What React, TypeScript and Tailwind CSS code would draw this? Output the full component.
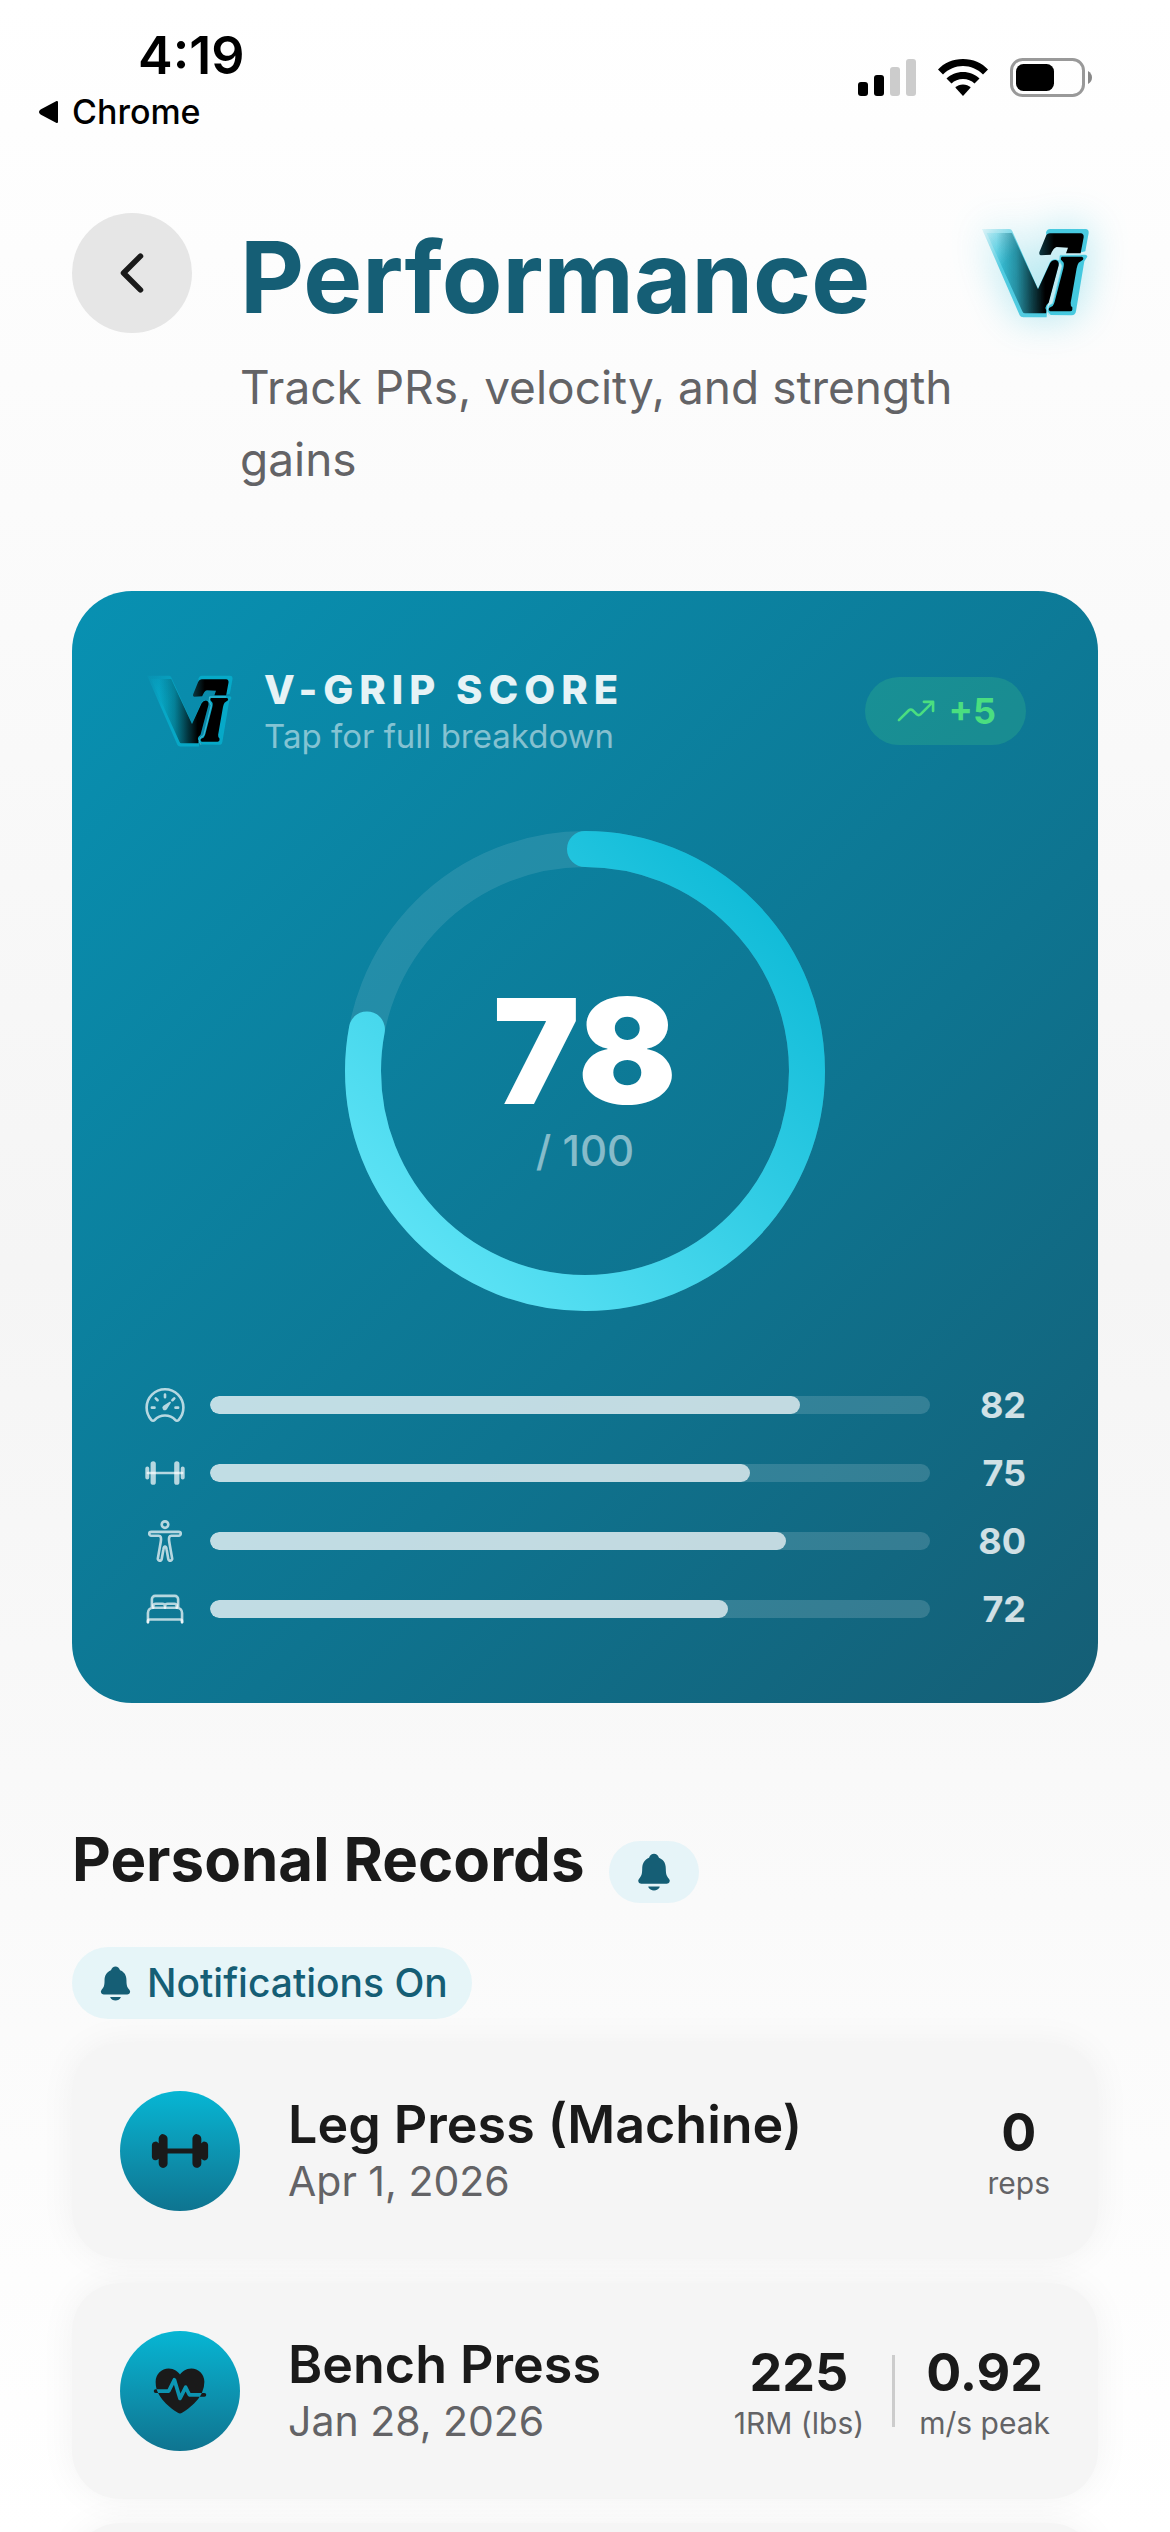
import { useId } from "react";
import type { IconType } from "react-icons";
import {
  IoBarbell,
  IoBarbellOutline,
  IoBedOutline,
  IoBodyOutline,
  IoChevronBack,
  IoFitness,
  IoNotifications,
  IoSpeedometerOutline,
  IoTrendingUpOutline,
} from "react-icons/io5";

type Stat = { value: string; label: string };

type PersonalRecord = {
  name: string;
  date: string;
  icon: IconType;
  stats: Stat[];
};

const SCORE = 78;

const breakdown: { label: string; icon: IconType; value: number }[] = [
  { label: "Velocity", icon: IoSpeedometerOutline, value: 82 },
  { label: "Strength", icon: IoBarbellOutline, value: 75 },
  { label: "Body", icon: IoBodyOutline, value: 80 },
  { label: "Recovery", icon: IoBedOutline, value: 72 },
];

const records: PersonalRecord[] = [
  {
    name: "Leg Press (Machine)",
    date: "Apr 1, 2026",
    icon: IoBarbell,
    stats: [{ value: "0", label: "reps" }],
  },
  {
    name: "Bench Press",
    date: "Jan 28, 2026",
    icon: IoFitness,
    stats: [
      { value: "225", label: "1RM (lbs)" },
      { value: "0.92", label: "m/s peak" },
    ],
  },
];

const Logo = ({ className }: { className?: string }) => {
  const id = useId();

  return (
    <svg viewBox="534 579 360 360" className={className} aria-hidden="true">
      <defs>
        <linearGradient id={`${id}edge`} gradientUnits="userSpaceOnUse" x1="546" y1="627" x2="640" y2="700">
          <stop offset="0" stopColor="#06b6d4" stopOpacity="0.1" />
          <stop offset="1" stopColor="#06b6d4" stopOpacity="0.65" />
        </linearGradient>
        <linearGradient id={`${id}fill`} gradientUnits="userSpaceOnUse" x1="590" y1="0" x2="735" y2="0">
          <stop offset="0" stopColor="#001a20" stopOpacity="0" />
          <stop offset="0.4" stopColor="#001a20" stopOpacity="0.3" />
          <stop offset="0.75" stopColor="#000d10" stopOpacity="0.75" />
          <stop offset="1" stopColor="#000" />
        </linearGradient>
        <linearGradient id={`${id}hook`} gradientUnits="userSpaceOnUse" x1="716" y1="0" x2="762" y2="0">
          <stop offset="0" stopColor="#0b3a44" />
          <stop offset="1" stopColor="#000" />
        </linearGradient>
      </defs>
      <path
        fill={`url(#${id}edge)`}
        d="M546 627H628Q634 627 637 634L714 806L749 728Q755 718 766 718L780 722L742 860L740 892H670Q662 892 659 886Z"
      />
      <path
        fill={`url(#${id}edge)`}
        fillOpacity="0.5"
        d="M560 639H636L714 808L750 730L738 880H674Q669 880 667 874Z"
      />
      <path
        fill={`url(#${id}fill)`}
        d="M560 639H636L714 808L750 730Q756 720 766 720Q778 722 776 736L746 848Q736 856 736 864Q741 872 738 880H674Q669 880 667 874Z"
      />
      <path
        fill="#06b6d4"
        fillOpacity="0.7"
        d="M738 637Q742 627 750 627H856Q867 627 866 639L856 694L843 697L846 650L740 652Z"
      />
      <path
        fill={`url(#${id}hook)`}
        d="M737 650Q741 640 750 640H842Q852 641 851 652L842 700H798L804 683L770 681Q760 683 752 704L722 706Q716 704 718 697Z"
      />
      <path
        fill="#06b6d4"
        fillOpacity="0.7"
        d="M780 706L856 704Q864 706 861 712L853 724L828 874Q826 886 815 886L752 885L742 874L748 856L758 850L786 738L778 722Z"
      />
      <path
        fill="none"
        stroke="#7fdcec"
        strokeOpacity="0.6"
        strokeWidth="3"
        d="M842 706H780L778 722L786 738L758 850L746 858L741 874L748 886"
      />
      <path
        fill="#000"
        d="M786 710H845Q852 712 849 719L836 728Q832 734 830 745L812 848Q811 858 817 862V869Q816 874 810 874H750Q744 871 747 864L758 858Q762 852 764 845L790 745Q793 730 790 727L783 719Q781 712 786 710Z"
      />
    </svg>
  );
};

const StatusBar = () => (
  <div className="flex items-start justify-between pt-7 pr-[78px] pl-[38px]">
    <div>
      <p className="pl-25 text-[52px] leading-[56px] font-semibold">4:19</p>
      <a href="#" className="flex items-center gap-3 text-[34px] leading-[56px] font-medium">
        <svg viewBox="0 0 22 24" className="w-[22px]" aria-hidden="true">
          <path d="M3 10.5L19 2v20L3 13.5Q1 12 3 10.5Z" stroke="#000" strokeWidth="2" strokeLinejoin="round" />
        </svg>
        Chrome
      </a>
    </div>
    <div className="flex items-center gap-[22px] pt-[29px]">
      <svg viewBox="0 0 58 40" className="w-[58px]" aria-label="Cellular signal">
        <rect y="25" width="10" height="14" rx="3" />
        <rect x="16" y="18" width="10" height="21" rx="3" />
        <rect x="32" y="10" width="10" height="29" rx="3" fill="#ccc" />
        <rect x="48" y="2" width="10" height="37" rx="3" fill="#ccc" />
      </svg>
      <svg viewBox="0 0 50 40" className="w-[50px]" aria-label="Wi-Fi">
        <path d="M25 2C15 2 6 6 0 12.500L5 17.500C10.500 12 17.500 9 25 9S39.500 12 45 17.500L50 12.500C44 6 35 2 25 2Z" />
        <path d="M25 15C18.500 15 12.800 17.500 8.500 21.500L13.500 26.500C16.500 23.700 20.500 22 25 22S33.500 23.700 36.500 26.500L41.500 21.500C37.200 17.500 31.500 15 25 15Z" />
        <path d="M25 27.500C22 27.500 19.300 28.700 17.300 30.600L25 39L32.700 30.600C30.700 28.700 28 27.500 25 27.500Z" />
      </svg>
      <svg viewBox="0 0 82 40" className="w-[82px]" aria-label="Battery">
        <rect x="1.500" y="2.500" width="72" height="36" rx="11" fill="none" stroke="#999" strokeWidth="3" />
        <rect x="6" y="7" width="38" height="27" rx="7.500" />
        <path d="M78 14Q82 16.500 82 20.500T78 27Z" fill="#888" />
      </svg>
    </div>
  </div>
);

const ScoreRing = () => (
  <div className="relative mx-auto mt-18 size-[480px]">
    <svg viewBox="0 0 480 480" className="size-full -rotate-90" aria-hidden="true">
      <defs>
        <linearGradient id="ring" x1="0" y1="0" x2="1" y2="1">
          <stop offset="0" stopColor="#67e8f9" />
          <stop offset="1" stopColor="#06b6d4" />
        </linearGradient>
      </defs>
      <circle cx="240" cy="240" r="222" fill="none" stroke="#fff" strokeOpacity="0.1" strokeWidth="36" />
      <circle
        cx="240"
        cy="240"
        r="222"
        fill="none"
        stroke="url(#ring)"
        strokeWidth="36"
        strokeLinecap="round"
        pathLength={100}
        strokeDasharray={`${SCORE} 100`}
      />
    </svg>
    <div className="absolute inset-0 flex flex-col items-center justify-center pt-2">
      <span className="text-[146px] leading-[152px] font-black text-white">{SCORE}</span>
      <span className="text-[42px] leading-[48px] font-medium text-white/50">/ 100</span>
    </div>
  </div>
);

const ScoreCard = () => (
  <section className="mt-24 rounded-[60px] bg-linear-[135deg] from-[#0891b2] via-[#0e7490] via-60% to-[#155e75] p-18">
    <div className="flex items-center justify-between">
      <div className="flex items-center gap-6">
        <Logo className="size-24" />
        <div className="pt-1">
          <h2 className="text-[40px] leading-[46px] font-extrabold tracking-[6px] text-white/90">V-GRIP SCORE</h2>
          <p className="text-[33px] leading-[46px] text-white/50">Tap for full breakdown</p>
        </div>
      </div>
      <span className="flex items-center gap-3 rounded-full bg-[#4ade80]/20 px-[30px] py-3 text-[36px] leading-[44px] font-bold text-[#4ade80]">
        <IoTrendingUpOutline className="size-[42px]" />
        +5
      </span>
    </div>

    <ScoreRing />

    <ul className="mt-18 space-y-6">
      {breakdown.map((item) => (
        <li key={item.label} className="flex h-11 items-center gap-6">
          <item.icon className="size-[42px] text-white/70" aria-label={item.label} />
          <div className="h-[18px] flex-1 overflow-hidden rounded-full bg-white/15">
            <div className="h-full rounded-full bg-white/70" style={{ width: `${item.value}%` }} />
          </div>
          <span className="w-[72px] text-right text-[36px] leading-[44px] font-bold text-white/80">{item.value}</span>
        </li>
      ))}
    </ul>
  </section>
);

const RecordCard = ({ record }: { record: PersonalRecord }) => (
  <li className="flex h-54 items-center gap-12 rounded-[48px] bg-[#f5f5f5] px-12 shadow-[0_0_36px_rgba(0,0,0,0.05)]">
    <div className="flex size-30 items-center justify-center rounded-full bg-linear-to-b from-[#06b6d4] to-[#0e7490]">
      <record.icon className="size-[60px]" />
    </div>
    <div className="flex-1">
      <h3 className="text-[52px] leading-[60px] font-semibold">{record.name}</h3>
      <p className="text-[41px] leading-[52px] text-[#636366]">{record.date}</p>
    </div>
    <div className="flex items-center gap-7">
      {record.stats.map((stat, i) => (
        <div key={stat.label} className="flex items-center gap-6">
          {i > 0 && <div className="h-18 w-[3px] bg-[#ccc]" />}
          <div className="pt-1 text-center">
            <p className="text-[52px] leading-[60px] font-bold">{stat.value}</p>
            <p className="text-[30px] leading-[40px] text-[#636366]">{stat.label}</p>
          </div>
        </div>
      ))}
    </div>
  </li>
);

const App = () => {
  return (
    <div className="h-screen overflow-hidden bg-linear-to-b from-white via-[#f5f5f5] to-white font-['Inter',sans-serif] text-[#1a1a1a]">
      <div className="text-black">
        <StatusBar />
      </div>

      <main className="px-18 pt-[73px]">
        <header className="flex items-start">
          <button
            type="button"
            aria-label="Back"
            className="flex size-30 shrink-0 items-center justify-center rounded-full bg-[#e6e6e6]"
          >
            <IoChevronBack className="size-[60px]" />
          </button>
          <div className="flex-1 pl-12">
            <h1 className="text-[99px] leading-[128px] font-bold text-[#155e75]">Performance</h1>
            <p className="mt-[10px] text-[46px] leading-[72px] text-[#636366]">
              Track PRs, velocity, and strength gains
            </p>
          </div>
          <Logo className="size-30 shrink-0 drop-shadow-[0_0_20px_rgba(6,182,212,0.4)]" />
        </header>

        <ScoreCard />

        <section className="mt-30">
          <div className="flex items-end gap-6">
            <h2 className="pb-2 text-[60px] leading-[72px] font-bold">Personal Records</h2>
            <button
              type="button"
              aria-label="Record notifications"
              className="flex h-[62px] w-[90px] items-center justify-center rounded-[36px] bg-[#e6f4f8] text-[#155e75]"
            >
              <IoNotifications className="size-[42px]" />
            </button>
          </div>
          <button
            type="button"
            className="mt-11 flex h-18 items-center gap-3 rounded-full bg-[#e6f5f8] px-6 text-[39px] leading-[48px] font-medium text-[#155e75]"
          >
            <IoNotifications className="size-[39px]" />
            Notifications On
          </button>
          <ul className="mt-6 space-y-6">
            {records.map((record) => (
              <RecordCard key={record.name} record={record} />
            ))}
            <li className="h-54 rounded-[48px] bg-[#f5f5f5] shadow-[0_0_36px_rgba(0,0,0,0.05)]" />
          </ul>
        </section>
      </main>
    </div>
  );
};

export default App;
